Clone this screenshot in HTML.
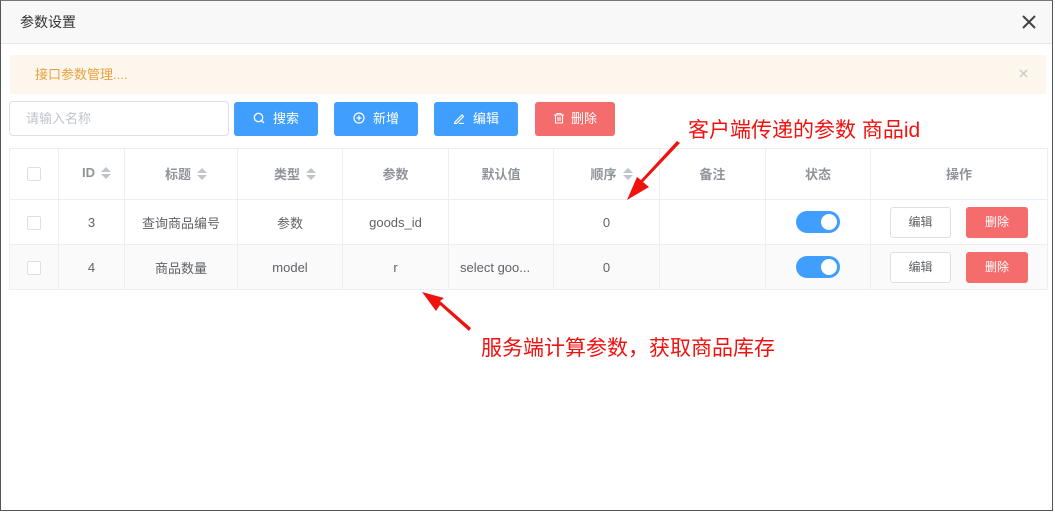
<!DOCTYPE html>
<html><head><meta charset="utf-8"><style>
*{margin:0;padding:0;box-sizing:border-box}
body{width:1055px;height:513px;background:#fff;font-family:"Liberation Sans","Noto Sans CJK SC",sans-serif;position:relative;overflow:hidden;color:#606266}
.abs{position:absolute}
.win{left:0;top:0;width:1053px;height:511px;border:1px solid #555;border-top-color:#777}
.hdr{left:1px;top:1px;width:1051px;height:43px;background:#f8f8f8;border-bottom:1px solid #e6e6e6;font-size:14px;color:#333;line-height:42px;padding-left:19px}
.alert{left:10px;top:55px;width:1036px;height:39px;background:#fdf6ec;color:#e6a23c;font-size:13px;line-height:39px;padding-left:25px}
.inp{left:9px;top:101px;width:220px;height:35px;border:1px solid #dcdfe6;border-radius:4px;font-size:13px;color:#c0c4cc;line-height:33px;padding-left:16px}
.btn{top:102px;height:34px;border-radius:3px;color:#fff;font-size:13px;line-height:34px;text-align:center}
table{position:absolute;left:9px;top:148px;border-collapse:collapse;font-size:13px;table-layout:fixed}
td,th{border:1px solid #ebeef5;text-align:center;color:#606266;font-weight:normal;overflow:hidden;white-space:nowrap}
th{height:51px;color:#909399;font-weight:bold;font-size:13px;padding-bottom:2px}
tr.r td{height:45px}
tr.g td{background:#fafafa}
.cb{display:inline-block;width:14px;height:14px;border:1px solid #dcdfe6;border-radius:2px;background:#fff;vertical-align:middle}
.sort{display:inline-block;width:0;height:14px;vertical-align:middle;margin-left:6px;position:relative;top:-1px}
.sort:before,.sort:after{content:"";position:absolute;left:0;border:5px solid transparent}
.sort:before{border-bottom-color:#c0c4cc;top:-4px}
.sort:after{border-top-color:#c0c4cc;top:8px}
.sw{display:inline-block;width:44px;height:22px;border-radius:11px;background:#409eff;position:relative;vertical-align:middle}
.sw:after{content:"";position:absolute;right:3px;top:3px;width:16px;height:16px;border-radius:50%;background:#fff}
.ob{display:inline-block;width:61px;height:31px;border:1px solid #dcdfe6;border-radius:3px;line-height:29px;font-size:12px;color:#606266;vertical-align:middle;background:#fff}
.od{display:inline-block;width:62px;height:31px;border-radius:3px;line-height:31px;font-size:12px;color:#fff;background:#f56c6c;margin-left:15px;vertical-align:middle}
.ann{color:#f0120f;font-size:21px;white-space:nowrap}
</style></head><body>
<div class="abs win"></div>
<div class="abs hdr">参数设置</div>
<svg class="abs" style="left:1021px;top:14px" width="16" height="16"><path d="M2 2L14 14M14 2L2 14" stroke="#444" stroke-width="2"/></svg>
<div class="abs alert">接口参数管理....</div>
<svg class="abs" style="left:1019px;top:69px" width="9" height="9"><path d="M1 1L8 8M8 1L1 8" stroke="#c8c8c8" stroke-width="1.3"/></svg>
<div class="abs inp">请输入名称</div>
<div class="abs btn" style="left:234px;width:84px;background:#409eff"><svg width="12" height="12" style="vertical-align:-1px;margin-right:8px"><circle cx="5.5" cy="5.5" r="4.2" fill="none" stroke="#fff" stroke-width="1.3"/><path d="M8.5 8.5L11 11" stroke="#fff" stroke-width="1.3"/></svg>搜索</div>
<div class="abs btn" style="left:334px;width:84px;background:#409eff"><svg width="12" height="12" style="vertical-align:-1px;margin-right:8px"><circle cx="6" cy="6" r="5" fill="none" stroke="#fff" stroke-width="1.2"/><path d="M6 3.5V8.5M3.5 6H8.5" stroke="#fff" stroke-width="1.2"/></svg>新增</div>
<div class="abs btn" style="left:434px;width:84px;background:#409eff"><svg width="12" height="12" style="vertical-align:-1px;margin-right:8px"><path d="M2 10L9 3L10.5 4.5L3.5 11.5H1.5ZM6 11.5H11" fill="none" stroke="#fff" stroke-width="1.2"/></svg>编辑</div>
<div class="abs btn" style="left:535px;width:80px;background:#f56c6c"><svg width="12" height="12" style="vertical-align:-1px;margin-right:6px"><path d="M1 3H11M4 3V1.5H8V3M2.5 3V11H9.5V3M5 5V9M7 5V9" fill="none" stroke="#fff" stroke-width="1.1"/></svg>删除</div>
<table>
<colgroup><col style="width:49px"><col style="width:66px"><col style="width:113px"><col style="width:105px"><col style="width:106px"><col style="width:105px"><col style="width:106px"><col style="width:106px"><col style="width:105px"><col style="width:177px"></colgroup>
<tr><th><span class="cb"></span></th><th>ID<span class="sort"></span></th><th>标题<span class="sort"></span></th><th>类型<span class="sort"></span></th><th>参数</th><th>默认值</th><th>顺序<span class="sort"></span></th><th>备注</th><th>状态</th><th>操作</th></tr>
<tr class="r"><td><span class="cb"></span></td><td>3</td><td>查询商品编号</td><td>参数</td><td>goods_id</td><td></td><td>0</td><td></td><td><span class="sw"></span></td><td><span class="ob">编辑</span><span class="od">删除</span></td></tr>
<tr class="r g"><td><span class="cb"></span></td><td>4</td><td>商品数量</td><td>model</td><td>r</td><td style="text-align:left;padding-left:11px">select goo...</td><td>0</td><td></td><td><span class="sw"></span></td><td><span class="ob">编辑</span><span class="od">删除</span></td></tr>
</table>
<div class="abs ann" style="left:688px;top:114px">客户端传递的参数 商品id</div>
<div class="abs ann" style="left:481px;top:332px">服务端计算参数，获取商品库存</div>
<svg class="abs" style="left:0;top:0" width="1055" height="513">
<path d="M680 143L643 182L649 187L627 200L637 177L641 180L677 141Z" fill="#f0120f"/>
<path d="M469 331L440 305L436 311L422 292L444 298L440 301L471 328Z" fill="#f0120f"/>
</svg>
</body></html>
